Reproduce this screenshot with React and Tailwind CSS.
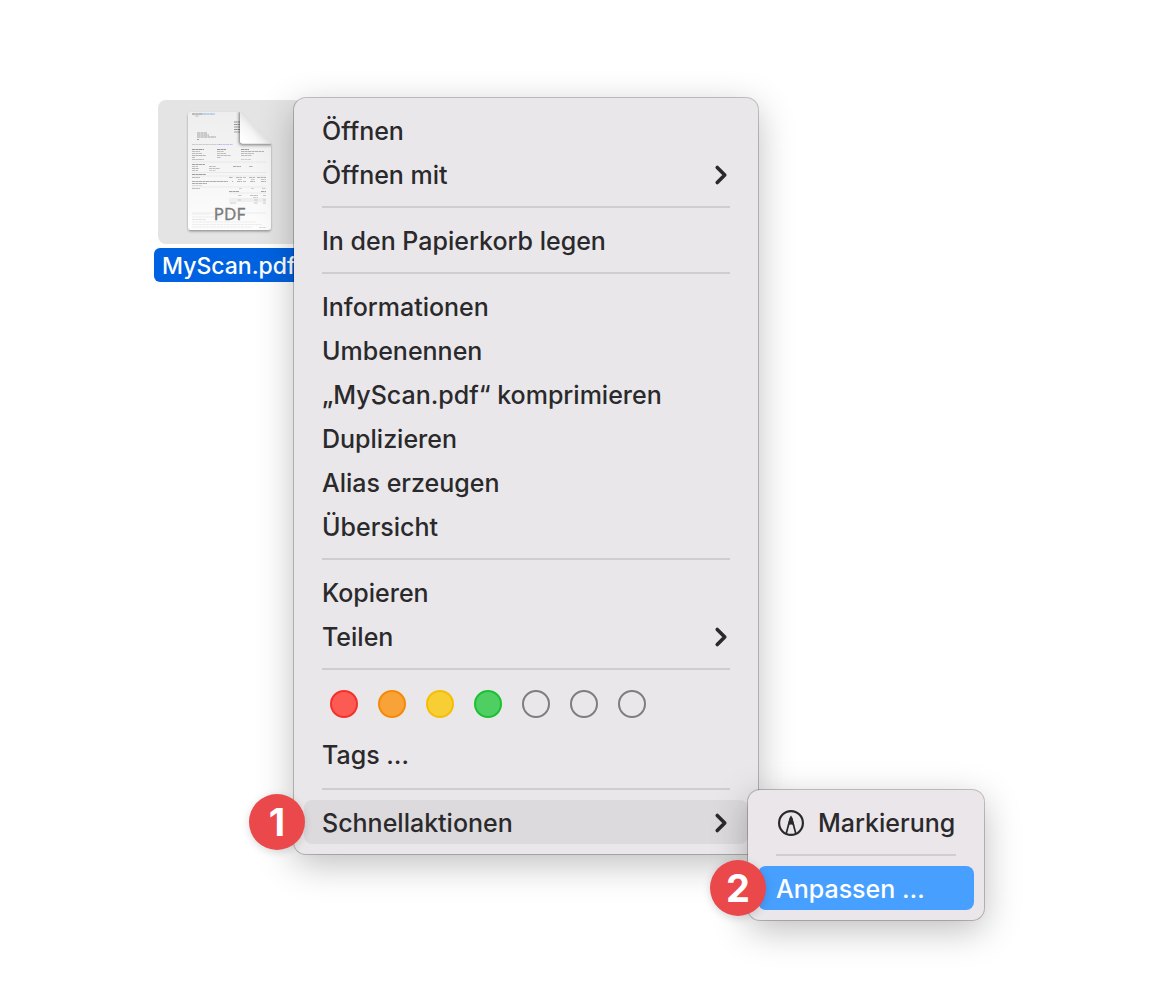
import { ChevronRight } from "lucide-react";

const tags = [
  { name: "Rot", color: "bg-[#fb5b53] border-[#f6302a]" },
  { name: "Orange", color: "bg-[#f8a337] border-[#f58a07]" },
  { name: "Gelb", color: "bg-[#f8ce35] border-[#f3bf05]" },
  { name: "Grün", color: "bg-[#4fcf61] border-[#1dbf36]" },
  { name: "Blau", color: "border-[#7f7d80]" },
  { name: "Lila", color: "border-[#7f7d80]" },
  { name: "Grau", color: "border-[#7f7d80]" },
];

// x, y, width, color of the text rows on the invoice preview
const rows = [
  [34, 14, 11, "#222"], [45, 14, 12, "#1b7fd0"], [37, 16, 4, "#999"],
  [39, 33, 10, "#555"], [39, 35, 12, "#555"], [39, 37, 19, "#555"], [39, 39.5, 2, "#555"],
  [76, 22, 6, "#333"], [76, 24.5, 6, "#444"], [76, 27, 6, "#444"], [76, 29.5, 6, "#333"], [76, 32, 6, "#555"],
  [34, 44.5, 28, "#aaa"], [61, 44.5, 14, "#8f9cf0"],
  [34, 49.5, 12, "#444"], [59, 49.5, 9, "#444"], [83, 49.5, 8, "#444"],
  [34, 51.5, 8, "#888"], [59, 51.5, 7, "#888"], [83, 51.5, 23, "#777"],
  [34, 53.5, 10, "#888"], [59, 53.5, 9, "#888"], [83, 53.5, 13, "#888"],
  [34, 55.5, 14, "#777"], [59, 55.5, 14, "#888"], [83, 55.5, 11, "#888"],
  [34, 57.5, 3, "#888"], [59, 57.5, 4, "#888"], [34, 59.5, 12, "#888"], [83, 59.5, 10, "#aaa"],
  [34, 64.5, 13, "#555"],
  [34, 66.5, 6, "#888"], [51, 66.5, 7, "#888"], [75, 66.5, 8, "#666"], [91, 66.5, 4, "#777"],
  [34, 68.5, 7, "#777"], [51, 68.5, 11, "#888"], [34, 70.5, 6, "#888"], [51, 70.5, 7, "#aaa"],
  [34, 74.5, 14, "#444"],
  [34, 77.5, 8, "#777"], [71, 77.5, 4, "#777"], [78, 77.5, 6, "#777"], [85, 77.5, 3, "#888"], [91, 77.5, 6, "#777"], [99, 77.5, 9, "#777"],
  [80, 79.5, 4, "#999"], [93, 79.5, 4, "#999"], [103, 79.5, 5, "#999"],
  [34, 81.5, 36, "#666"], [74, 81.5, 1, "#666"], [79, 81.5, 5, "#777"], [85, 81.5, 3, "#888"], [92, 81.5, 5, "#777"], [103, 81.5, 5, "#777"],
  [34, 83.5, 15, "#666"], [34, 85.5, 10, "#bbb"],
  [34, 88.5, 8, "#888"], [81, 88.5, 3, "#aaa"], [93, 88.5, 3, "#aaa"], [104, 88.5, 4, "#aaa"],
  [71, 91.5, 10, "#555"], [103, 91.5, 5, "#555"],
  [80, 95.5, 4, "#999"], [92, 95.5, 8, "#888"], [105, 95.5, 3, "#999"], [95, 97.5, 5, "#aaa"],
  [80, 100, 3, "#aaa"], [96, 100, 4, "#aaa"], [105, 100, 3, "#aaa"],
  [72, 103, 6, "#999"], [96, 103, 4, "#999"], [105, 103, 3, "#999"],
  [34, 114, 18, "#ddd"], [34, 117, 30, "#ddd"], [34, 119.5, 14, "#ccc"], [34, 122, 64, "#ddd"],
  [34, 124.5, 70, "#ddd"], [34, 127, 60, "#ddd"], [101, 127.5, 7, "#bbb"],
];

function FilePreview() {
  return (
    <svg viewBox="0 0 144 144" className="size-36" aria-hidden="true">
      <defs>
        <linearGradient id="paper" x1="0" y1="0" x2="0" y2="1">
          <stop offset="0" stopColor="#eeeeee" />
          <stop offset="1" stopColor="#fdfdfd" />
        </linearGradient>
        <linearGradient id="curl" x1="0.1" y1="0.9" x2="0.6" y2="0.4">
          <stop offset="0" stopColor="#ffffff" />
          <stop offset="0.5" stopColor="#f6f6f6" />
          <stop offset="1" stopColor="#dcdcdc" />
        </linearGradient>
        <filter id="lift" x="-20%" y="-20%" width="140%" height="140%">
          <feDropShadow dx="0" dy="1.5" stdDeviation="1.2" floodOpacity="0.35" />
        </filter>
        <filter id="fold" x="-40%" y="-40%" width="180%" height="180%">
          <feDropShadow dx="-1" dy="1.5" stdDeviation="1.8" floodOpacity="0.5" />
        </filter>
        <clipPath id="sheet">
          <path d="M33 12H82L113 43V127a3 3 0 0 1-3 3H33a3 3 0 0 1-3-3V15a3 3 0 0 1 3-3Z" />
        </clipPath>
      </defs>
      <path d="M33 12H82L113 43V127a3 3 0 0 1-3 3H33a3 3 0 0 1-3-3V15a3 3 0 0 1 3-3Z" fill="url(#paper)" filter="url(#lift)" />
      <g clipPath="url(#sheet)">
        {rows.map(([x, y, width, color], i) => (
          <path key={i} d={`M${x} ${y}h${width}`} stroke={color} strokeWidth="1" strokeDasharray="3.2 0.3" opacity="0.5" />
        ))}
        <path d="M34 62H108M34 72.5H108M34 76H108M34 87H108M71 93H108M34 113H108" stroke="#ddd" strokeWidth="0.5" />
        <path d="M71 100H108" stroke="#000" strokeWidth="4" opacity="0.04" />
        <path d="M82 10V40.5Q82 43.5 85 43.5H115V10Z" fill="#e4e4e4" filter="url(#fold)" />
      </g>
      <path d="M82 12V40.5Q82 43.5 85 43.5H112.5Q104 38 97 30Q90 21 82 12Z" fill="url(#curl)" />
      <text
        x="71.5"
        y="120"
        textAnchor="middle"
        fontSize="17"
        fill="#7b7b7b"
        stroke="#7b7b7b"
        strokeWidth="0.4"
        className="font-['Open_Sans',sans-serif]"
      >
        PDF
      </text>
    </svg>
  );
}

function MarkupIcon() {
  return (
    <svg viewBox="0 0 26 26" className="size-[26px]" fill="none" stroke="currentColor" strokeWidth="2.2" aria-hidden="true">
      <circle cx="13" cy="13" r="11.9" />
      <path d="M12.4 8L8.2 23.5M13.6 8L17.8 23.5" strokeWidth="1.7" />
      <path d="M13 5.5L12 7L9.6 15.5Q11.4 14.6 13 14.6T16.4 15.5L14 7Z" fill="currentColor" stroke="none" />
    </svg>
  );
}

function Badge({ children, className }) {
  return (
    <span
      className={`absolute top-1/2 right-full flex size-14 -translate-y-1/2 items-center justify-center rounded-full bg-[#ea484b] text-[38px] font-bold text-white shadow-[0_2px_8px_rgba(0,0,0,0.15)] ${className}`}
    >
      {children}
    </span>
  );
}

function MenuItem({ label, icon, hasSubmenu, className = "" }) {
  return (
    <button
      type="button"
      role="menuitem"
      aria-haspopup={hasSubmenu ? "menu" : undefined}
      className={`flex h-11 w-full items-center rounded-lg px-[18px] pt-0.5 text-left whitespace-nowrap ${className}`}
    >
      {icon && <span className="mr-3.5 ml-0.5">{icon}</span>}
      <span className="flex-1">{label}</span>
      {hasSubmenu && <ChevronRight className="-mr-1.5 size-[30px]" strokeWidth={2.9} aria-hidden="true" />}
    </button>
  );
}

function Separator() {
  return <div role="separator" className="mx-[18px] my-2.5 h-0.5 bg-[#cfcdd0]" />;
}

const panel =
  "rounded-xl p-2.5 shadow-[0_0_0_1px_rgba(0,0,0,0.22),0_10px_36px_rgba(0,0,0,0.26)]";

export default function App() {
  return (
    <main className="flex min-h-screen items-start bg-white px-[154px] pt-[98px] pb-20 font-[Inter,sans-serif] text-[25px] leading-8 font-medium text-[#2a292b]">
      <figure className="w-38 shrink-0 pt-0.5">
        <div className="mx-1 rounded-lg bg-[#e4e4e4]">
          <FilePreview />
        </div>
        <figcaption className="mt-1 rounded-md bg-[#0062e1] px-2 pt-0.5 text-[23px] leading-8 whitespace-nowrap text-white">
          MyScan.pdf
        </figcaption>
      </figure>

      <div role="menu" aria-label="Kontextmenü" className={`relative -ml-3 w-[464px] shrink-0 bg-[#e9e7ea] ${panel}`}>
        <MenuItem label="Öffnen" />
        <MenuItem label="Öffnen mit" hasSubmenu />
        <Separator />
        <MenuItem label="In den Papierkorb legen" />
        <Separator />
        <MenuItem label="Informationen" />
        <MenuItem label="Umbenennen" />
        <MenuItem label="„MyScan.pdf“ komprimieren" />
        <MenuItem label="Duplizieren" />
        <MenuItem label="Alias erzeugen" />
        <MenuItem label="Übersicht" />
        <Separator />
        <MenuItem label="Kopieren" />
        <MenuItem label="Teilen" hasSubmenu />
        <Separator />
        <div className="pb-0.5">
          <div className="flex gap-5 px-[26px] pt-2.5 pb-3.5">
            {tags.map((tag) => (
              <button key={tag.name} type="button" aria-label={tag.name} className={`size-7 rounded-full border-2 ${tag.color}`} />
            ))}
          </div>
          <MenuItem label="Tags …" />
        </div>
        <Separator />
        <div className="relative">
          <MenuItem label="Schnellaktionen" hasSubmenu className="bg-[#dcdadd]" />
          <Badge className="-mr-px">1</Badge>
          <div role="menu" aria-label="Schnellaktionen" className={`absolute -top-2.5 left-full w-[236px] bg-[#eae6e9] ${panel}`}>
            <MenuItem label="Markierung" icon={<MarkupIcon />} />
            <Separator />
            <div className="relative">
              <MenuItem label="Anpassen …" className="bg-[#479fff] text-white" />
              <Badge className="-mr-2">2</Badge>
            </div>
          </div>
        </div>
      </div>
    </main>
  );
}
